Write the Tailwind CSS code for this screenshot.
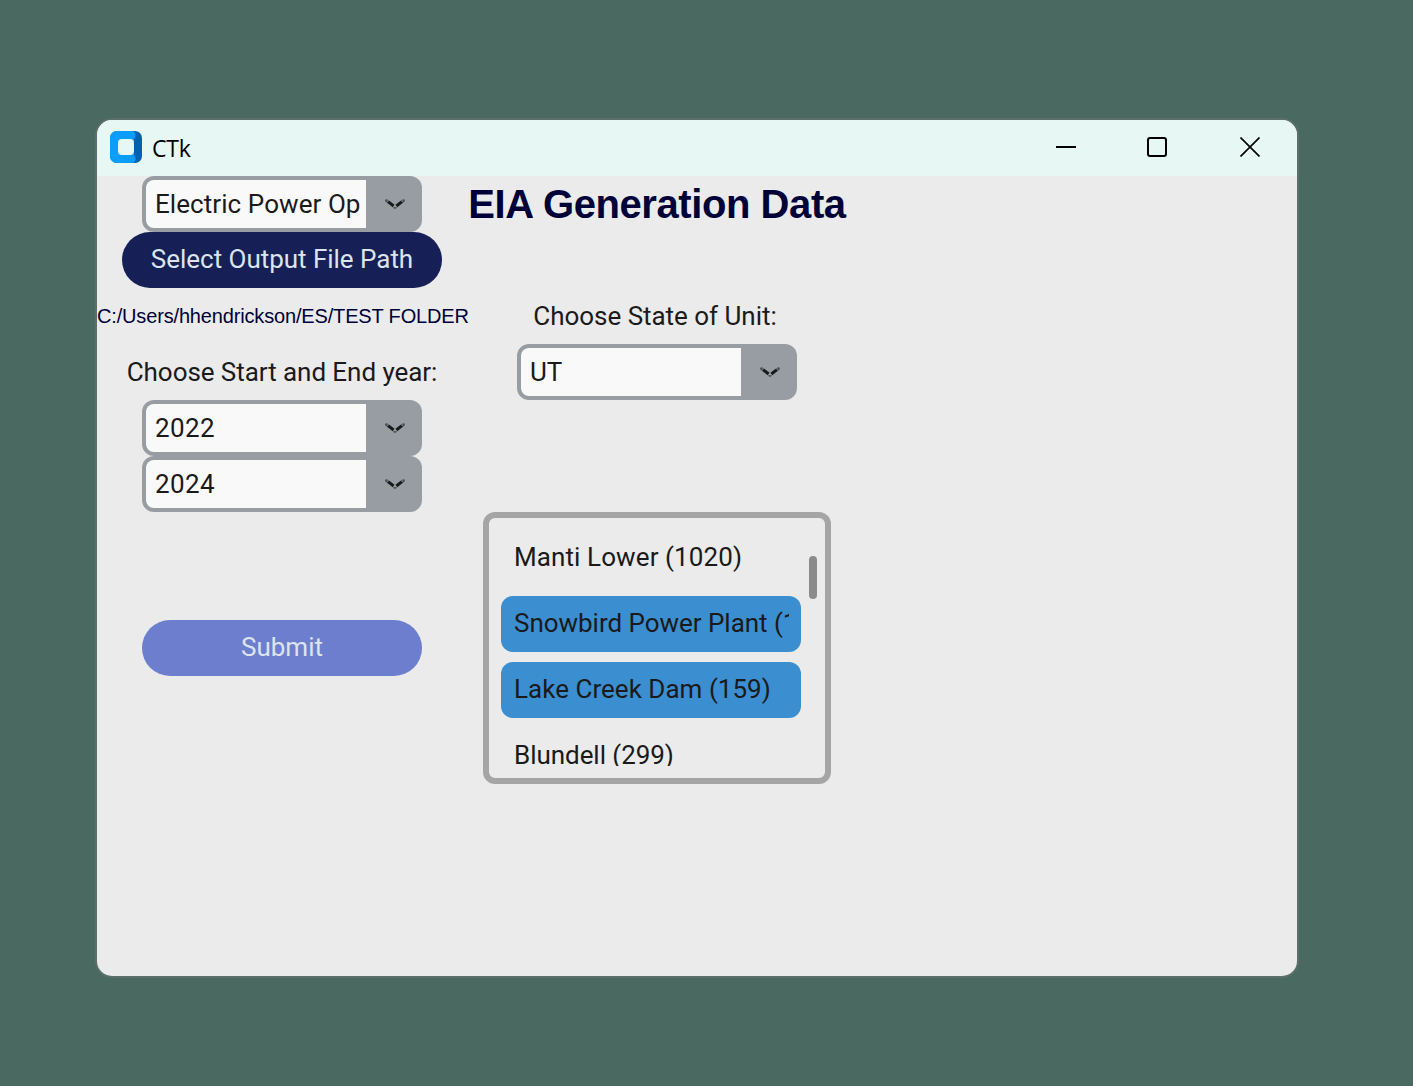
<!DOCTYPE html>
<html lang="en">
<head>
<meta charset="utf-8">
<title>CTk</title>
<script src="https://cdn.jsdelivr.net/npm/@tailwindcss/browser@4"></script>
</head>
<body class="flex h-[1086px] w-[1413px] overflow-hidden bg-[#4a6960] pl-[97px] pt-[120px] font-['Roboto',sans-serif] text-[26px] leading-[30px] text-[#1a1a1a]">
<svg class="hidden">
  <symbol id="chevron" viewBox="0 0 20 10">
    <path d="M1.5 1.6 L3.500 3.100 M18.500 1.600 L16.500 3.100" fill="none" stroke="#45484b" stroke-width="2.6" stroke-linecap="round"/>
    <path d="M3.4 2.900 L8.600 7 M16.600 2.900 L11.400 7" fill="none" stroke="#1a1a1a" stroke-width="3.1"/>
    <path d="M8.5 8.200 L10 9.300 L11.500 8.200" fill="none" stroke="#4d5054" stroke-width="1.4"/>
    <path d="M1.9 2h1M17.1 2h1M9.500 7.500h1" fill="none" stroke="#979da2" stroke-width="1"/>
  </symbol>
</svg>
<div class="flex h-[856px] w-[1200px] flex-col overflow-hidden rounded-[15px] bg-[#ebebeb] shadow-[0_0_0_2px_#5c7069]">
  <header class="flex h-14 shrink-0 items-center bg-[#e7f7f4] pl-[13px]">
    <svg class="mb-[2px] size-8" viewBox="0 0 32 32">
      <rect width="32" height="32" rx="7" fill="#0061b1"/>
      <path d="M7 0h14.5a4 4 0 0 1 4 4a4 4 0 0 1-1.5 3.5v17a4 4 0 0 1 1.500 3.500a4 4 0 0 1-4 4H7a7 7 0 0 1-7-7V7a7 7 0 0 1 7-7z" fill="#0a9dfd"/>
      <rect x="8" y="8" width="16" height="16" rx="4" fill="#e7f7f4"/>
    </svg>
    <span class="ml-[10px] font-['Open_Sans',sans-serif] text-[23px] tracking-[-0.2px] text-black">CTk</span>
    <div class="mb-[2px] ml-auto flex items-center pr-[37px]">
      <svg class="mr-[71px] size-5" viewBox="0 0 20 20"><path d="M0 10h20" stroke="#000" stroke-width="2"/></svg>
      <svg class="mr-[73px] size-5" viewBox="0 0 20 20"><rect x="1" y="1" width="18" height="18" rx="2" fill="none" stroke="#000" stroke-width="2"/></svg>
      <svg class="size-5" viewBox="0 0 20 20"><path d="M.5.5l19 19M19.500.5l-19 19" stroke="#000" stroke-width="1.7"/></svg>
    </div>
  </header>
  <main class="grid grid-cols-[370px_380px]">
    <section class="flex flex-col items-center">
      <div class="flex h-14 w-[280px] rounded-[12px] bg-[#979da2] p-1">
        <div class="w-[220px] overflow-hidden whitespace-nowrap rounded-l-[8px] bg-[#f9f9fa] pl-[9px] leading-[48px] tracking-[0.07px]">Electric Power Op</div>
        <svg class="ml-[18.5px] mt-[19px] h-[10px] w-5"><use href="#chevron"/></svg>
      </div>
      <button class="h-14 w-80 rounded-full bg-[#162056] pb-[2px] tracking-[-0.03px] text-[#dce4ee]">Select Output File Path</button>
      <p class="flex h-14 w-[371px] items-center self-start whitespace-nowrap font-['Liberation_Sans',sans-serif] text-[20px] tracking-[-0.16px] text-[#000038]">C:/Users/hhendrickson/ES/TEST FOLDER</p>
      <p class="flex h-14 items-center whitespace-nowrap tracking-[-0.06px]">Choose Start and End year:</p>
      <div class="flex h-14 w-[280px] rounded-[12px] bg-[#979da2] p-1">
        <div class="w-[220px] rounded-l-[8px] bg-[#f9f9fa] pl-[9px] leading-[48px] tracking-[0.35px]">2022</div>
        <svg class="ml-[18.5px] mt-[19px] h-[10px] w-5"><use href="#chevron"/></svg>
      </div>
      <div class="flex h-14 w-[280px] rounded-[12px] bg-[#979da2] p-1">
        <div class="w-[220px] rounded-l-[8px] bg-[#f9f9fa] pl-[9px] leading-[48px] tracking-[0.35px]">2024</div>
        <svg class="ml-[18.5px] mt-[19px] h-[10px] w-5"><use href="#chevron"/></svg>
      </div>
      <button class="mt-[108px] h-14 w-[280px] rounded-full bg-[#6d7ecf] pb-[2px] text-[#dce4ee]">Submit</button>
    </section>
    <section class="flex flex-col items-center">
      <h1 class="flex h-14 items-center whitespace-nowrap font-['Liberation_Sans',sans-serif] text-[40px] font-bold tracking-[-0.42px] text-[#000038]">EIA Generation Data</h1>
      <p class="mr-1 mt-14 flex h-14 items-center whitespace-nowrap tracking-[-0.03px]">Choose State of Unit:</p>
      <div class="flex h-14 w-[280px] rounded-[12px] bg-[#979da2] p-1">
        <div class="w-[220px] rounded-l-[8px] bg-[#f9f9fa] pl-[9px] leading-[48px]">UT</div>
        <svg class="ml-[18.5px] mt-[19px] h-[10px] w-5"><use href="#chevron"/></svg>
      </div>
      <div class="mt-28 flex h-[272px] w-[348px] rounded-[12px] border-[6px] border-[#a5a5a5] pl-3 pt-3">
        <ul class="flex h-[236px] w-[300px] flex-col gap-[10px] overflow-hidden whitespace-nowrap leading-[54px]">
          <li class="h-14 shrink-0 pl-[13px] tracking-[0.1px]">Manti Lower (1020)</li>
          <li class="h-14 shrink-0 rounded-[12px] bg-[#3b8ed0] pl-[13px] pr-3"><div class="overflow-hidden tracking-[-0.03px]">Snowbird Power Plant (1</div></li>
          <li class="h-14 shrink-0 rounded-[12px] bg-[#3b8ed0] px-[13px] tracking-[0.03px]">Lake Creek Dam (159)</li>
          <li class="h-14 shrink-0 pl-[13px] tracking-[-0.05px]">Blundell (299)</li>
        </ul>
        <div class="ml-2 mt-[26px] h-[43px] w-2 rounded bg-[#8b8b8b]"></div>
      </div>
    </section>
  </main>
</div>
</body>
</html>
